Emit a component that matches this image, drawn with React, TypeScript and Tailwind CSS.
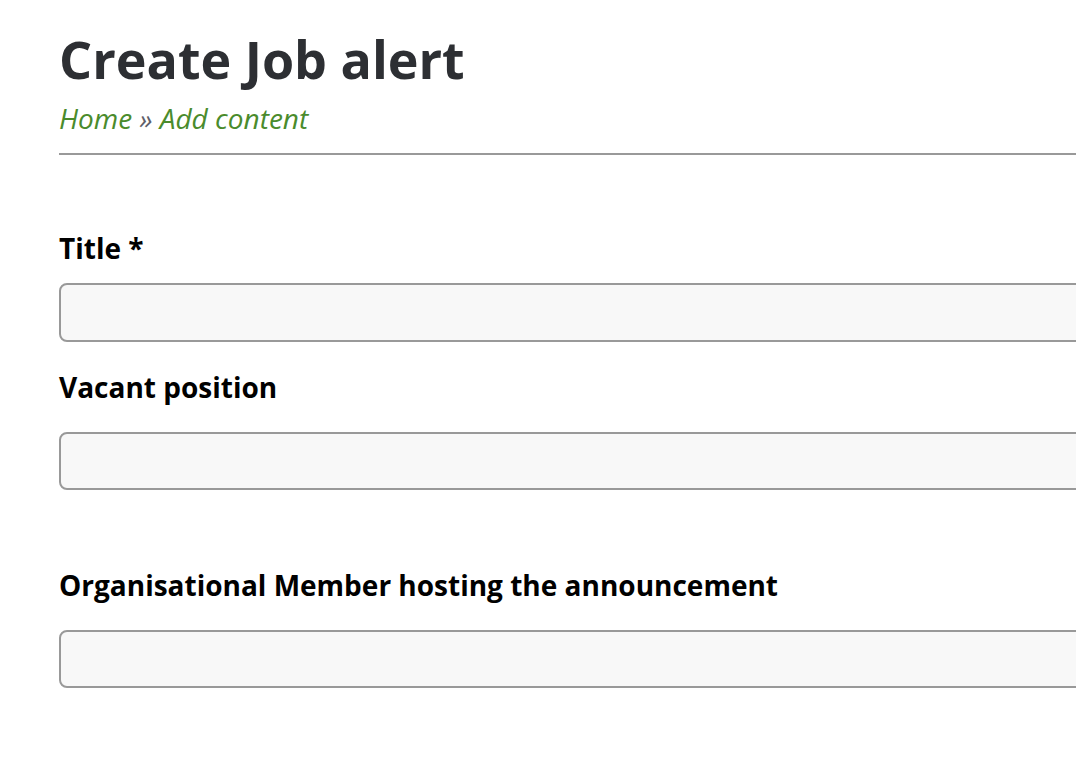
const fields = [
  { label: 'Title *', top: 'mt-[75px]', inputGap: 'mt-[17px]', h: 'h-[59px]' },
  { label: 'Vacant position', top: 'mt-[27px]', inputGap: 'mt-[27px]', h: 'h-[58px]' },
  { label: 'Organisational Member hosting the announcement', top: 'mt-[77px]', inputGap: 'mt-[27px]', h: 'h-[58px]' },
]

export default function App() {
  return (
    <div className="h-[758px] overflow-hidden bg-white font-['Open_Sans',sans-serif]">
      <div className="w-[1200px] pl-[59px] pt-[29px]">
        <h1 className="text-[52px] font-bold leading-[60px] text-[#2d2f33]">Create Job alert</h1>
        <nav className="mt-[11px] text-[28px] italic leading-[36px] text-[#4a8b2c]">
          <span>Home</span>
          <span className="text-[#5f5f6a]"> » </span>
          <span>Add content</span>
        </nav>
        <div className="mt-[17px] h-[2px] bg-[#999]" />
        {fields.map(f => (
          <div key={f.label} className={f.top}>
            <label className="block text-[28px] font-bold leading-[36px] text-black">{f.label}</label>
            <input
              type="text"
              className={`${f.inputGap} ${f.h} block w-full rounded-[8px] border-2 border-[#999] bg-[#f8f8f8] outline-none`}
            />
          </div>
        ))}
      </div>
    </div>
  )
}
